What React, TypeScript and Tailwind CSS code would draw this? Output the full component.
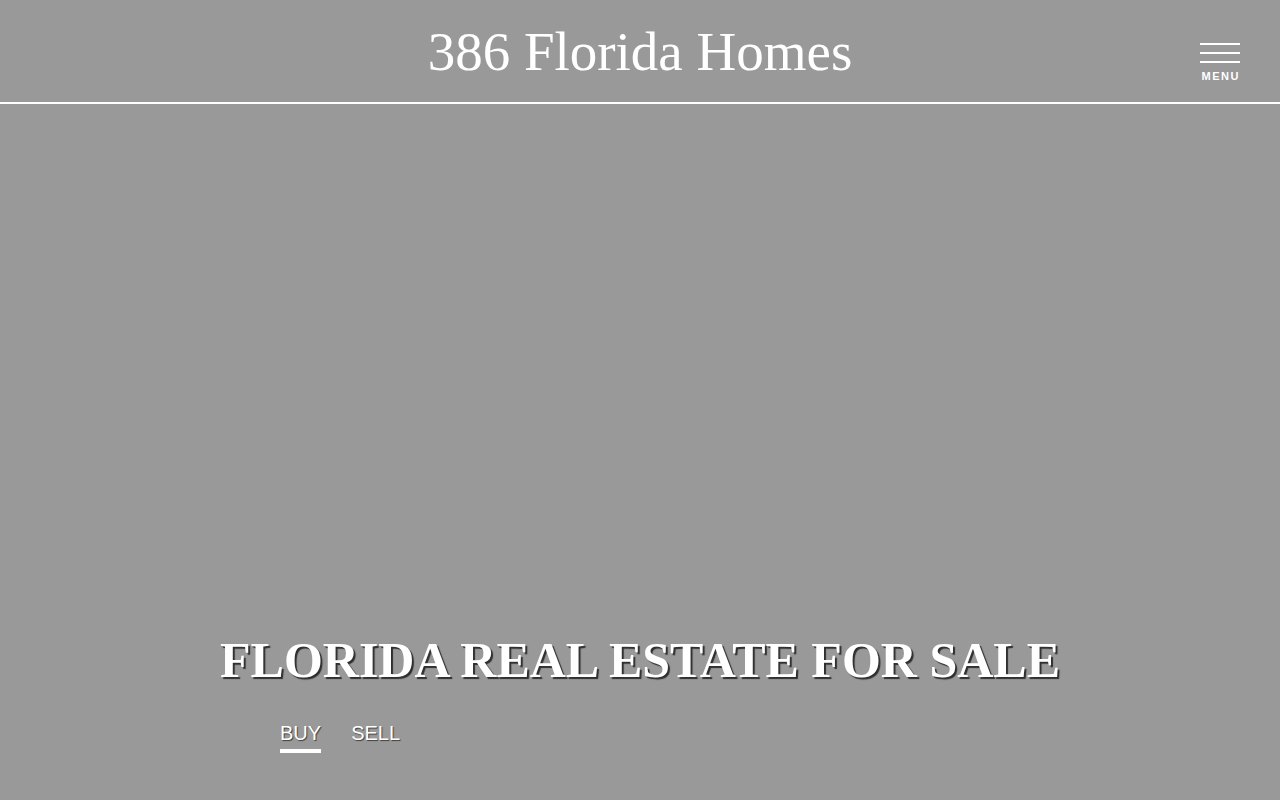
import { useState } from 'react'

export default function App() {
  const [tab, setTab] = useState<'buy' | 'sell'>('buy')

  return (
    <div className="min-h-screen h-[800px] bg-[#999999] flex flex-col overflow-hidden">
      <header className="relative h-[104px] shrink-0 border-b-2 border-white flex justify-center">
        <a href="#" className="mt-[20px] text-white text-[55px] leading-[63px] font-['Liberation_Serif',serif]">
          386 Florida Homes
        </a>
        <button className="absolute right-[40px] top-[43px] flex flex-col items-center text-white">
          <span className="block w-[40px] h-[2px] bg-white" />
          <span className="block w-[40px] h-[2px] bg-white mt-[7px]" />
          <span className="block w-[40px] h-[2px] bg-white mt-[7px]" />
          <span className="mt-[8px] text-[11px] leading-none font-bold tracking-[1.5px] pl-[1.5px] font-['Liberation_Sans',sans-serif]">
            MENU
          </span>
        </button>
      </header>

      <section className="flex-1 flex flex-col justify-end pb-[47px]">
        <div className="w-[720px] mx-auto flex flex-col">
          <h1 className="text-center text-white font-bold uppercase text-[50px] leading-[58px] font-['Liberation_Serif',serif] [text-shadow:2px_2px_1px_rgba(0,0,0,0.7)] whitespace-nowrap -mx-[80px]">
            Florida Real Estate for Sale
          </h1>
          <div className="mt-[33px] flex gap-[30px] font-['Liberation_Sans',sans-serif]">
            <button
              onClick={() => setTab('buy')}
              className={`text-white text-[20px] leading-[23px] pb-[4px] border-b-4 ${tab === 'buy' ? 'border-white' : 'border-transparent'} [text-shadow:1px_1px_1px_rgba(0,0,0,0.6)]`}
            >
              BUY
            </button>
            <button
              onClick={() => setTab('sell')}
              className={`text-white text-[20px] leading-[23px] pb-[4px] border-b-4 ${tab === 'sell' ? 'border-white' : 'border-transparent'} [text-shadow:1px_1px_1px_rgba(0,0,0,0.6)]`}
            >
              SELL
            </button>
          </div>
        </div>
      </section>
    </div>
  )
}
